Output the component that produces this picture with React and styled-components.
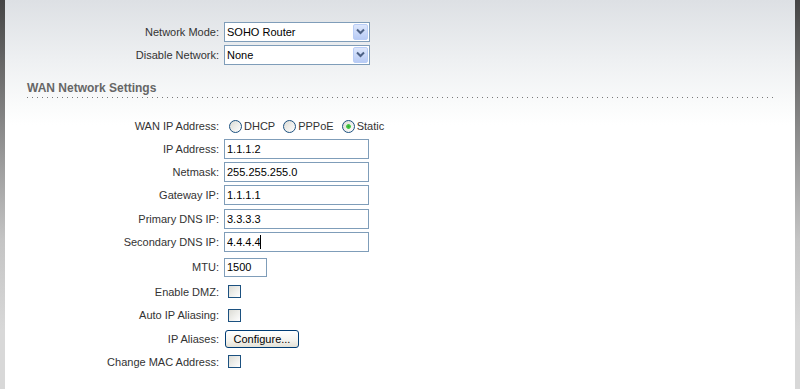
import React from "react";
import styled, { createGlobalStyle } from "styled-components";

const GlobalStyle = createGlobalStyle`
  html, body {
    margin: 0;
    padding: 0;
  }
  body {
    font-family: "Liberation Sans", Arial, sans-serif;
    font-size: 11px;
    color: #333;
  }
`;

const Page = styled.div`
  display: flex;
  height: 389px;
  width: 800px;
  overflow: hidden;
  background: linear-gradient(#dde0e4 0, #eef0f2 60px, #fafbfb 105px, #fff 125px);
`;

const Edge = styled.div`
  width: 5px;
  flex: none;
  background: linear-gradient(#454545 0, #8a8a8a 130px, #c4c4c4 240px, #d8d8d8 330px);
`;

const Main = styled.div`
  flex: 1;
  display: flex;
  flex-direction: column;
  padding-top: 20px;
`;

const Row = styled.div`
  display: flex;
  align-items: center;
  height: ${(p) => p.$h || 23}px;
`;

const Label = styled.label`
  width: 214px;
  flex: none;
  text-align: right;
  margin-right: 5px;
  color: #333;
  white-space: nowrap;
`;

const SelectBox = styled.div`
  display: flex;
  align-items: center;
  width: 143px;
  height: 18px;
  border: 1px solid #7f9db9;
  background: #fff;
  padding-right: 1px;
`;

const SelectValue = styled.span`
  flex: 1;
  padding-left: 2px;
  color: #000;
`;

const DropButton = styled.span`
  width: 15px;
  height: 16px;
  display: flex;
  align-items: center;
  justify-content: center;
  border-radius: 2px;
  border: 1px solid #b9cdf6;
  box-sizing: border-box;
  background: linear-gradient(#dde7fc, #b8cbf5);
`;

const TextField = styled.input`
  box-sizing: border-box;
  width: ${(p) => p.$w || 145}px;
  height: ${(p) => p.$ht || 20}px;
  border: 1px solid #7f9db9;
  padding: 0 0 0 2px;
  margin: 0;
  font-family: "Liberation Sans", Arial, sans-serif;
  font-size: 11px;
  color: #000;
  background: #fff;
  outline: none;
`;

const FieldWrap = styled.div`
  position: relative;
  display: flex;
`;

const Caret = styled.span`
  position: absolute;
  left: 36px;
  top: 3px;
  width: 1px;
  height: 14px;
  background: #000;
`;

const Heading = styled.h3`
  position: relative;
  margin: 15px 22px 17px 22px;
  padding-bottom: 3px;
  font-size: 12px;
  line-height: 14px;
  font-weight: bold;
  color: #666;

  &::after {
    content: "";
    position: absolute;
    left: 0;
    right: 0;
    bottom: 0;
    height: 1px;
    background-image: linear-gradient(to right, #7a7a7a 1px, transparent 1px);
    background-size: 5px 1px;
    background-repeat: repeat-x;
  }
`;

const RadioGroup = styled.div`
  display: flex;
  align-items: center;
  padding-left: 5px;
`;

const RadioItem = styled.label`
  display: flex;
  align-items: center;
  margin-right: 8px;
  color: #333;
`;

const Radio = styled.input.attrs({ type: "radio" })`
  appearance: none;
  margin: 0 2px 0 0;
  width: 13px;
  height: 13px;
  border-radius: 50%;
  border: 1px solid #1c5180;
  box-sizing: border-box;
  background: linear-gradient(135deg, #dcdcd5, #fff);

  &:checked {
    background: radial-gradient(circle, #2fa82f 0, #4ccb4c 2px, transparent 2.8px),
      linear-gradient(135deg, #dcdcd5, #fff);
  }
`;

const Check = styled.input.attrs({ type: "checkbox" })`
  appearance: none;
  margin: 0 0 0 4px;
  width: 13px;
  height: 13px;
  border: 1px solid #1c5180;
  box-sizing: border-box;
  background: linear-gradient(135deg, #dcdcd5, #fff);
`;

const Button = styled.button`
  margin-left: 1px;
  width: 74px;
  height: 18px;
  padding: 0;
  border: 1px solid #003c74;
  border-radius: 3px;
  background: linear-gradient(#fff, #f4f3ee 60%, #e3e1d6);
  font-family: "Liberation Sans", Arial, sans-serif;
  font-size: 11px;
  color: #000;
`;

const Chevron = () => (
  <svg width="9" height="7" viewBox="0 0 9 7">
    <path d="M1 1.5 L4.5 5 L8 1.5" fill="none" stroke="#4d6185" strokeWidth="2" />
  </svg>
);

const Select = ({ value }) => (
  <SelectBox>
    <SelectValue>{value}</SelectValue>
    <DropButton>
      <Chevron />
    </DropButton>
  </SelectBox>
);

const wanFields = [
  { label: "IP Address:", value: "1.1.1.2", h: 23 },
  { label: "Netmask:", value: "255.255.255.0", h: 23 },
  { label: "Gateway IP:", value: "1.1.1.1", h: 24 },
  { label: "Primary DNS IP:", value: "3.3.3.3", h: 23 },
];

const App = () => {
  return (
    <>
      <GlobalStyle />
      <Page>
        <Edge />
        <Main>
          <Row>
            <Label>Network Mode:</Label>
            <Select value="SOHO Router" />
          </Row>
          <Row>
            <Label>Disable Network:</Label>
            <Select value="None" />
          </Row>

          <Heading>WAN Network Settings</Heading>

          <Row $h={22}>
            <Label>WAN IP Address:</Label>
            <RadioGroup>
              <RadioItem>
                <Radio name="wan" />
                DHCP
              </RadioItem>
              <RadioItem>
                <Radio name="wan" />
                PPPoE
              </RadioItem>
              <RadioItem>
                <Radio name="wan" defaultChecked />
                Static
              </RadioItem>
            </RadioGroup>
          </Row>
          {wanFields.map((f) => (
            <Row key={f.label} $h={f.h}>
              <Label>{f.label}</Label>
              <TextField defaultValue={f.value} />
            </Row>
          ))}
          <Row $h={24}>
            <Label>Secondary DNS IP:</Label>
            <FieldWrap>
              <TextField defaultValue="4.4.4.4" />
              <Caret />
            </FieldWrap>
          </Row>
          <Row $h={26}>
            <Label>MTU:</Label>
            <TextField $w={43} $ht={19} defaultValue="1500" />
          </Row>
          <Row>
            <Label>Enable DMZ:</Label>
            <Check />
          </Row>
          <Row $h={24}>
            <Label>Auto IP Aliasing:</Label>
            <Check />
          </Row>
          <Row>
            <Label>IP Aliases:</Label>
            <Button>Configure...</Button>
          </Row>
          <Row>
            <Label>Change MAC Address:</Label>
            <Check />
          </Row>
        </Main>
        <Edge />
      </Page>
    </>
  );
};

export default App;
